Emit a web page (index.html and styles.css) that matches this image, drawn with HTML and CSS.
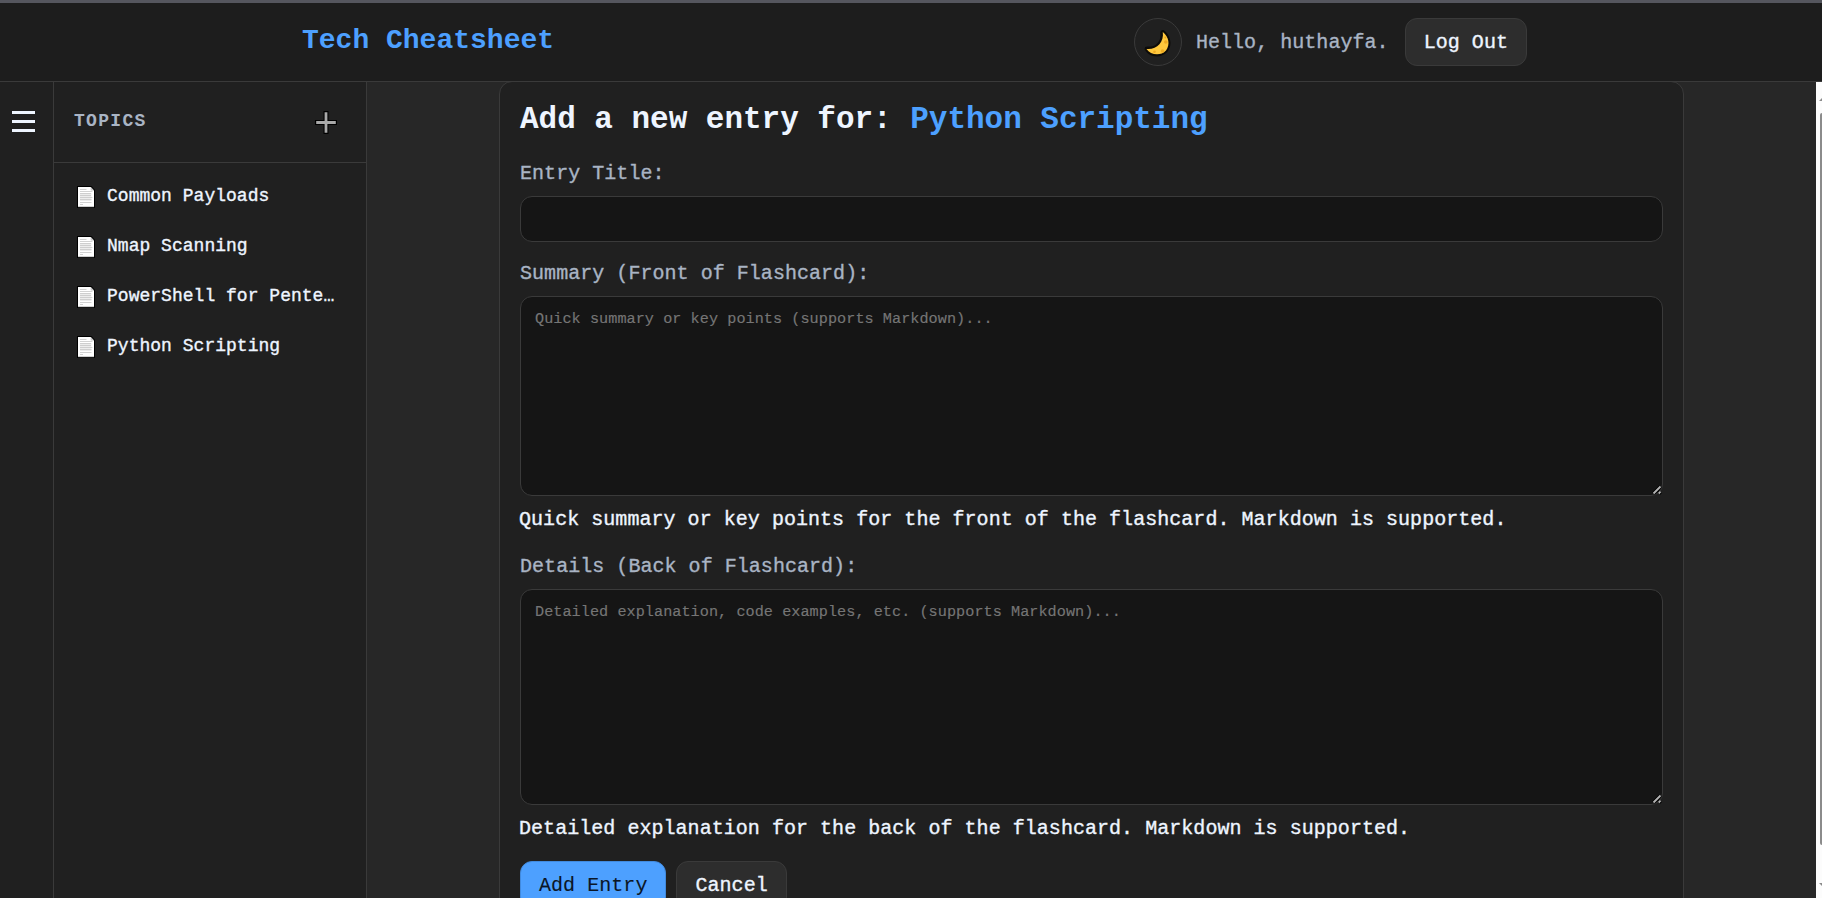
FILE: index.html
```html
<!DOCTYPE html>
<html lang="en">
<head>
<meta charset="utf-8">
<title>Tech Cheatsheet</title>
<link rel="stylesheet" href="styles.css">
</head>
<body>
<svg width="0" height="0" class="defs">
  <symbol id="doc" viewBox="0 0 18 22">
    <path d="M0 0H14.500L18 4V22H0Z" fill="#000"/>
    <path d="M1 1H13.700L17 4.500V21H1Z" fill="#fff"/>
    <path d="M13.700 1V4.500H17Z" fill="#c8c8c8"/>
    <path d="M3 7H14.500V15H3Z" fill="#ececec"/>
    <path d="M3 3.500H9.500M3 5.500H15.400M3 7.500H14M3 9.500H14M3 11.500H15.400M3 13.500H14.500M3 16.500H14.500M3 18.500H6" stroke="#c6c6c6" stroke-width=".8"/>
    <path d="M1 20.700H17" stroke="#aaa" stroke-width=".7"/>
  </symbol>
  <symbol id="grip" viewBox="0 0 10 10">
    <path d="M1.500 8.500L8.500 1.500M7 8.500L8.500 7" stroke="#000" stroke-width="3.600"/>
    <path d="M1.500 8.500L8.500 1.500M6.700 8.500L8.500 6.700" stroke="#b4b4b4" stroke-width="1.800"/>
  </symbol>
</svg>
<div class="app">
  <header class="topbar">
    <a class="brand">Tech Cheatsheet</a>
    <div class="user">
      <button class="theme" aria-label="Theme">
        <svg width="28" height="28" viewBox="0 0 28 28">
          <path d="M19.500 1C27 6.500 28.800 16.500 23.200 23C16.500 30 5 28.500 .7 20.500Q.2 17.500 3 17.500C11.500 18.500 17.500 12.500 16.300 4Q16.800 .5 19.500 1Z" fill="#0c0b09"/>
          <path d="M18.800 3C25 8 26.300 15.500 22 21.500C16.500 27.500 6.500 26 2.500 20C12.500 21 20.200 13.500 18.800 3Z" fill="#ffc83d"/>
          <circle cx="21.800" cy="13" r="1.800" fill="#eeaa22"/><circle cx="21.300" cy="8.500" r="1" fill="#eeaa22"/><circle cx="18.500" cy="22" r="1.800" fill="#eeaa22"/><circle cx="10.500" cy="22.700" r="1.300" fill="#eeaa22"/>
        </svg>
      </button>
      <span class="hello">Hello, huthayfa.</span>
      <button class="btn">Log Out</button>
    </div>
  </header>
  <div class="body">
    <div class="rail"><div class="burger"><i></i><i></i><i></i></div></div>
    <aside class="side">
      <div class="side-head"><span>TOPICS</span>
        <svg width="22" height="23" viewBox="0 0 22 23"><path d="M11 0V23M0 11.500H22" stroke="#000" stroke-width="5"/><path d="M11 1.200V21.800M1.200 11.500H20.800" stroke="#a9a9a9" stroke-width="2.800"/></svg>
      </div>
      <nav class="topics">
        <a><svg width="18" height="22"><use href="#doc"/></svg><span>Common Payloads</span></a>
        <a><svg width="18" height="22"><use href="#doc"/></svg><span>Nmap Scanning</span></a>
        <a><svg width="18" height="22"><use href="#doc"/></svg><span>PowerShell for Pente…</span></a>
        <a><svg width="18" height="22"><use href="#doc"/></svg><span>Python Scripting</span></a>
      </nav>
    </aside>
    <main class="main">
      <form class="card">
        <h1>Add a new entry for: <em>Python Scripting</em></h1>
        <label>Entry Title:</label>
        <input class="field" type="text">
        <label>Summary (Front of Flashcard):</label>
        <div class="area"><textarea class="field summary" placeholder="Quick summary or key points (supports Markdown)..."></textarea><svg class="grip"><use href="#grip"/></svg></div>
        <p>Quick summary or key points for the front of the flashcard. Markdown is supported.</p>
        <label>Details (Back of Flashcard):</label>
        <div class="area"><textarea class="field details" placeholder="Detailed explanation, code examples, etc. (supports Markdown)..."></textarea><svg class="grip"><use href="#grip"/></svg></div>
        <p>Detailed explanation for the back of the flashcard. Markdown is supported.</p>
        <div class="actions"><button type="button" class="btn primary">Add Entry</button><button type="button" class="btn">Cancel</button></div>
      </form>
    </main>
    <div class="scroll"><i class="up"></i><i class="thumb"></i><i class="down"></i></div>
  </div>
</div>
</body>
</html>
```
FILE: styles.css
```css
* { box-sizing: border-box; }
body { margin: 0; background: #1d1d1d; color: #eef5ff; overflow: hidden; font: 20px/24px "Liberation Mono", monospace; letter-spacing: .04px; -webkit-text-stroke: .35px; }
.defs { position: absolute; }
.app { height: 898px; display: flex; flex-direction: column; border-top: 3px solid #55565e; }
.topbar { height: 79px; flex: none; display: flex; justify-content: space-between; align-items: center; padding: 0 295px 0 302px; background: #1d1d1d; border-bottom: 1px solid #3a3a3a; }
.brand { font-size: 28px; font-weight: bold; letter-spacing: 0; color: #4da0ff; padding-bottom: 2px; -webkit-text-stroke: 0; }
.user { display: flex; align-items: center; white-space: nowrap; }
.theme { width: 48px; height: 48px; padding: 2px 0 0; border: 1px solid #3a3a3a; border-radius: 50%; background: #202020; display: grid; place-items: center; }
.hello { margin: 0 16px 0 14px; padding-top: 1px; color: #a9b4c4; }
.btn { height: 48px; padding: 1px 18px 0; border: 1px solid #3a3a3a; border-radius: 12px; background: #2d2d2d; color: #eef5ff; font: inherit; letter-spacing: .05px; white-space: nowrap; }
.body { flex: 1; min-height: 0; display: flex; }
.rail { width: 54px; flex: none; background: #202020; border-right: 1px solid #3a3a3a; padding: 29px 0 0 12px; }
.burger { display: flex; flex-direction: column; gap: 6px; width: 23px; }
.burger i { height: 3px; background: #eef5ff; }
.side { width: 313px; flex: none; background: #202020; border-right: 1px solid #3a3a3a; }
.side-head { height: 81px; border-bottom: 1px solid #3a3a3a; display: flex; justify-content: space-between; align-items: center; padding: 1px 29px 0 20px; }
.side-head span { font-size: 18px; font-weight: bold; letter-spacing: 1.3px; color: #a9b4c4; padding-bottom: 4px; -webkit-text-stroke: 0; }
.topics { padding-top: 9px; }
.topics a { height: 50px; display: flex; align-items: center; gap: 12px; padding-left: 23px; font-size: 18px; letter-spacing: .02px; white-space: nowrap; }
.topics svg { margin-right: 0; }
.topics span { padding-bottom: 2px; }
.main { flex: 1; min-width: 0; background: #272727; padding: 0 132px; overflow: hidden; }
.card { height: 900px; margin-top: -1px; background: #202020; border: 1px solid #3a3a3a; border-radius: 13px; padding: 20px; display: flex; flex-direction: column; }
h1 { margin: 1px 0 19px; height: 34px; font-size: 31px; line-height: 34px; letter-spacing: -.02px; white-space: nowrap; -webkit-text-stroke: 0; }
h1 em { font-style: normal; color: #4da0ff; }
label { color: #a9b4c4; height: 24px; line-height: 24px; margin: 8px 0 10px; }
h1 + label { margin: 6px 0 10px; }
.field { display: block; width: 100%; background: #151515; border: 1px solid #3a3a3a; border-radius: 12px; padding: 11px 14px; color: #eef5ff; font: 15.200px/22px "Liberation Mono", monospace; letter-spacing: .04px; resize: none; overflow: hidden; outline: 0; -webkit-text-stroke: .15px; }
.field::placeholder { color: #757575; opacity: 1; }
input.field { height: 46px; flex: none; margin-bottom: 12px; }
.summary { height: 200px; }
.details { height: 216px; }
.area { position: relative; flex: none; }
.grip { position: absolute; right: 1px; bottom: 1px; width: 10px; height: 10px; }
p { margin: 12px 0 15px -1px; height: 24px; white-space: nowrap; }
.actions { display: flex; gap: 10px; margin-top: 5px; }
.primary { background: #4da0ff; border-color: #418ade; color: #0b1626; -webkit-text-stroke: .1px; }
.scroll { width: 6px; flex: none; background: #fcfcfc; display: flex; flex-direction: column; align-items: flex-end; overflow: hidden; }
.up { margin: 16px -3px 0 0; border: solid transparent; border-width: 0 3px 3px; border-bottom-color: #8b8b8b; }
.thumb { width: 2px; height: 732px; margin-top: 12px; background: #8b8b8b; border-radius: 2px 0 0 2px; }
.down { margin: 38px -3px 0 0; border: solid transparent; border-width: 3px 3px 0; border-top-color: #8b8b8b; }
```
